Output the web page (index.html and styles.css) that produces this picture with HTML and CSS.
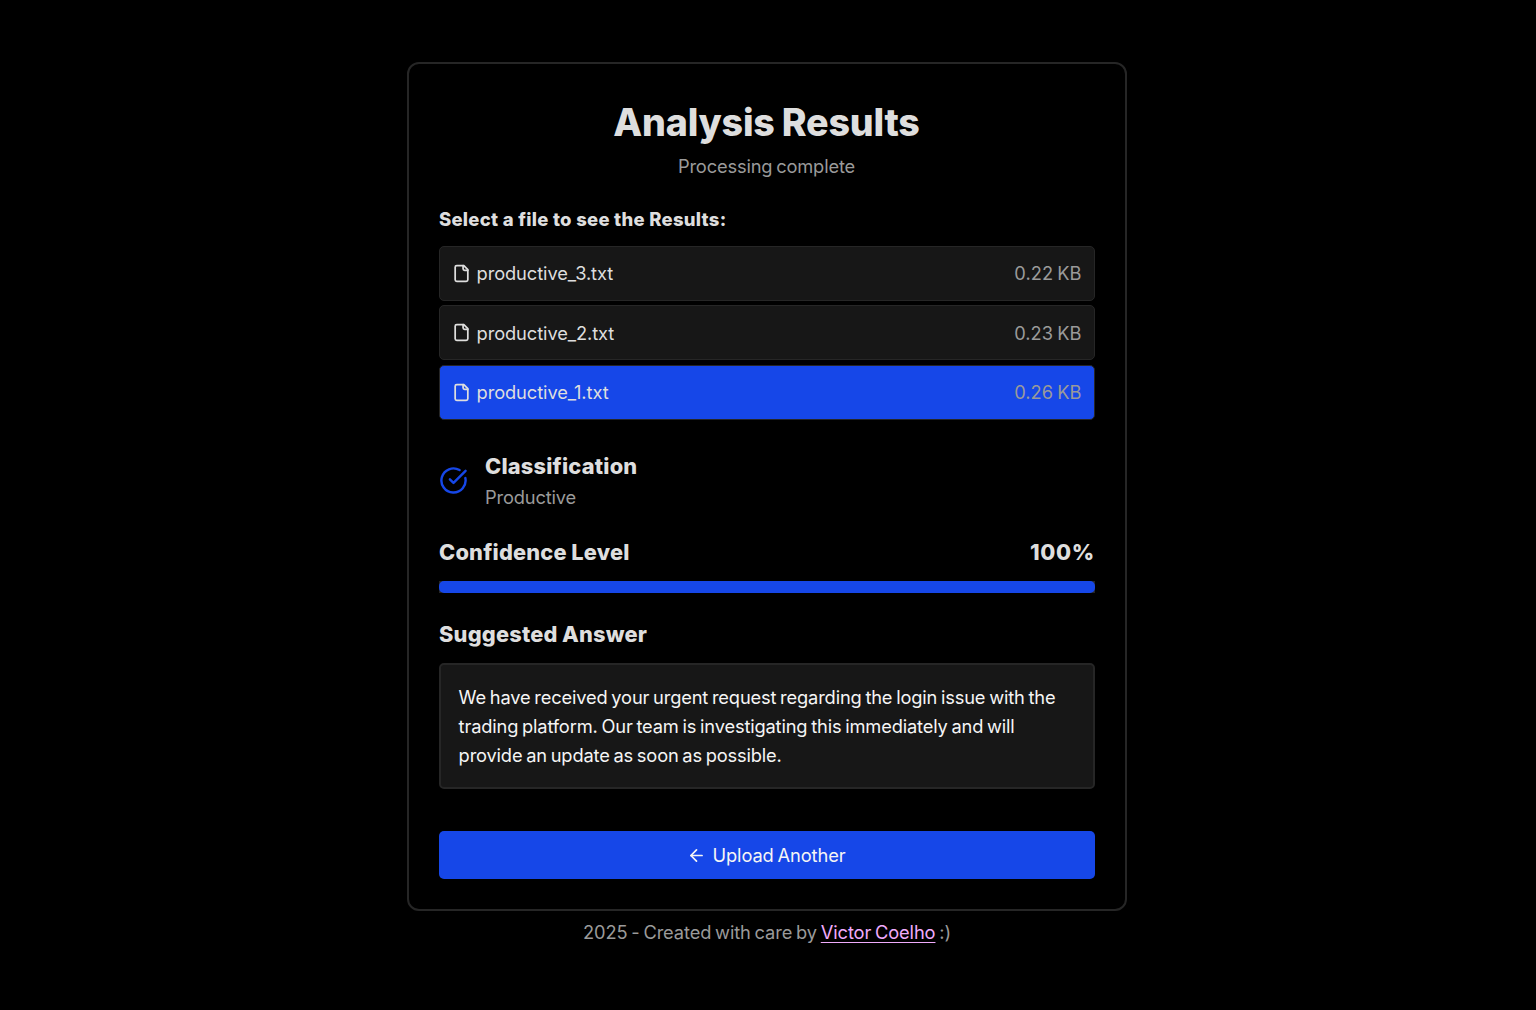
FILE: index.html
```html
<!DOCTYPE html>
<html lang="en">
<head>
<meta charset="utf-8">
<title>Analysis Results</title>
<link rel="stylesheet" href="styles.css">
</head>
<body>
<main class="card">
  <header class="header">
    <h1 class="title">Analysis Results</h1>
    <p class="subtitle">Processing complete</p>
  </header>
  <h2 class="prompt">Select a file to see the Results:</h2>
  <ul class="files">
    <li class="file">
      <svg class="file-icon" viewBox="0 0 24 24"><path d="M15 2H6a2 2 0 0 0-2 2v16a2 2 0 0 0 2 2h12a2 2 0 0 0 2-2V7Z"/><path d="M14 2v4a2 2 0 0 0 2 2h4"/></svg>
      <span class="file-name">productive_3.txt</span><span class="file-size">0.22 KB</span>
    </li>
    <li class="file">
      <svg class="file-icon" viewBox="0 0 24 24"><path d="M15 2H6a2 2 0 0 0-2 2v16a2 2 0 0 0 2 2h12a2 2 0 0 0 2-2V7Z"/><path d="M14 2v4a2 2 0 0 0 2 2h4"/></svg>
      <span class="file-name">productive_2.txt</span><span class="file-size">0.23 KB</span>
    </li>
    <li class="file selected">
      <svg class="file-icon" viewBox="0 0 24 24"><path d="M15 2H6a2 2 0 0 0-2 2v16a2 2 0 0 0 2 2h12a2 2 0 0 0 2-2V7Z"/><path d="M14 2v4a2 2 0 0 0 2 2h4"/></svg>
      <span class="file-name">productive_1.txt</span><span class="file-size">0.26 KB</span>
    </li>
  </ul>
  <section class="classification">
    <svg class="check-icon" viewBox="0 0 24 24"><path d="M21.801 10A10 10 0 1 1 17 3.335"/><path d="m9 11 3 3L22 4"/></svg>
    <div>
      <h3 class="heading">Classification</h3>
      <p class="class-value">Productive</p>
    </div>
  </section>
  <section class="confidence">
    <div class="confidence-row">
      <h3 class="heading">Confidence Level</h3>
      <span class="heading percent">100%</span>
    </div>
    <div class="bar"><div class="bar-fill" style="width:100%"></div></div>
  </section>
  <h3 class="heading answer-heading">Suggested Answer</h3>
  <p class="answer">We have received your urgent request regarding the login issue with the trading platform. Our team is investigating this immediately and will provide an update as soon as possible.</p>
  <button class="upload">
    <svg class="arrow-icon" viewBox="0 0 24 24"><path d="m12 19-7-7 7-7"/><path d="M19 12H5"/></svg>
    <span>Upload Another</span>
  </button>
</main>
<footer class="footer">2025 - Created with care by <a class="author" href="#">Victor Coelho</a> :)</footer>
</body>
</html>
```
FILE: styles.css
```css
* { box-sizing: border-box; margin: 0; padding: 0; }
body {
  min-height: 1010px;
  padding-top: 62px;
  background: #000;
  color: #dedede;
  font-family: Inter, sans-serif;
  font-size: 18.3px;
  line-height: 29px;
  letter-spacing: -0.16px;
  word-spacing: -1.2px;
  -webkit-font-smoothing: antialiased;
}
svg { fill: none; stroke: currentColor; stroke-width: 2; stroke-linecap: round; stroke-linejoin: round; flex: none; }
.card {
  width: 720px;
  height: 849px;
  margin: 0 0 0 407px;
  padding: 34px 30px 30px;
  border: 2px solid #262626;
  border-radius: 12px;
}
.header { padding-right: 1px; text-align: center; }
.title { font-size: 37.6px; line-height: 50px; font-weight: 800; letter-spacing: -0.2px; word-spacing: -1px; }
.subtitle { margin-top: 4px; color: #9a9a9a; }
.prompt { margin-top: 24px; font-size: 18.5px; line-height: 29px; font-weight: 800; letter-spacing: 0.27px; word-spacing: 0; }
.files { display: grid; gap: 4.4px; margin-top: 12px; list-style: none; }
.file {
  display: flex;
  align-items: center;
  height: 55px;
  padding: 0 12.5px 0 12px;
  border: 1px solid #262626;
  border-radius: 5px;
  background: #171717;
}
.file-icon { width: 19px; height: 19px; margin-right: 5.6px; stroke-width: 2.2; }
.file-name { flex: 1; padding-top: 0.4px; letter-spacing: -0.1px; }
.file-size { padding-top: 0.4px; color: #9a9a9a; letter-spacing: 0.05px; }
.selected { background: #1647e8; }
.classification { display: flex; align-items: center; gap: 17px; margin-top: 30px; }
.check-icon { width: 29px; height: 29px; margin-bottom: 1px; color: #1647e8; }
.heading { font-size: 21.8px; line-height: 32px; font-weight: 800; letter-spacing: 0.2px; word-spacing: -0.5px; }
.percent { letter-spacing: 0.7px; }
.class-value { padding-top: 1px; color: #9a9a9a; }
.confidence { margin-top: 24px; }
.confidence-row { display: flex; justify-content: space-between; }
.bar { height: 12px; margin-top: 13px; background: #262626; }
.bar-fill { height: 100%; border-radius: 5px; background: #1647e8; }
.answer-heading { margin-top: 25px; }
.answer { height: 126px; margin-top: 13px; padding: 18px 18px 18px 17.6px; border: 2px solid #262626; border-radius: 5px; background: #171717; color: #f5f5f5; }
.upload {
  display: flex;
  align-items: center;
  justify-content: center;
  gap: 6px;
  width: 100%;
  height: 48px;
  margin-top: 42px;
  padding: 1px 1px 0 0;
  border: 0;
  border-radius: 5px;
  background: #1647e8;
  color: #f5f5f5;
  font: inherit;
  letter-spacing: -0.1px;
  word-spacing: inherit;
}
.arrow-icon { width: 19px; height: 19px; stroke-width: 2.2; }
.footer { width: 720px; margin: 7px 0 0 407px; letter-spacing: -0.12px; text-align: center; color: #9a9a9a; }
.author { color: #f0abfc; text-decoration-thickness: 1px; text-underline-offset: 3px; text-decoration-skip-ink: none; }
```
